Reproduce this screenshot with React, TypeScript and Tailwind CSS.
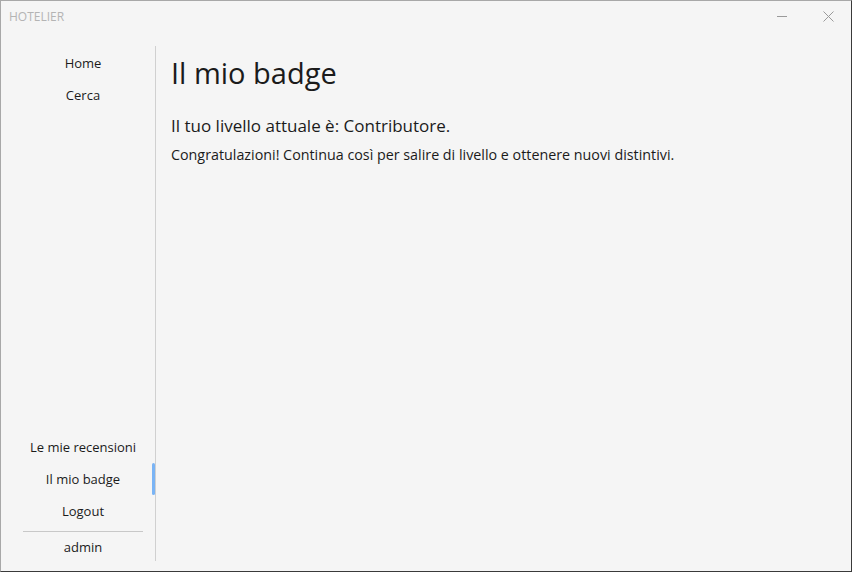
import React from "react";

const font = { fontFamily: '"Segoe UI", "Open Sans", "Noto Sans", sans-serif' };

function NavItem({ label, active }: { label: string; active?: boolean }) {
  return (
    <div className="relative flex h-[32px] items-center justify-center text-[13px] text-[#1b1b1b]">
      <span>{label}</span>
      {active && <div className="absolute right-0 top-[-1px] h-[32px] w-[3px] rounded-sm bg-[#7ab4f5]" />}
    </div>
  );
}

export default function App() {
  return (
    <div
      className="flex h-[572px] w-[852px] flex-col border border-t-[#a8a8a8] border-l-[#a8a8a8] border-r-[#3a3a3a] border-b-[#3a3a3a] bg-[#f5f5f5]"
      style={font}
    >
      <div className="flex h-[31px] items-center justify-between">
        <span className="pl-[8px] text-[12px] text-[#b4b4b4]">HOTELIER</span>
        <div className="flex items-center">
          <div className="flex h-[31px] w-[46px] items-center justify-center">
            <div className="h-px w-[10px] bg-[#9a9a9a]" />
          </div>
          <div className="flex h-[31px] w-[46px] items-center justify-center">
            <svg width="11" height="11" viewBox="0 0 11 11">
              <path d="M0.5 0.5 L10.5 10.5 M10.5 0.5 L0.5 10.5" stroke="#9a9a9a" strokeWidth="1" />
            </svg>
          </div>
        </div>
      </div>
      <div className="flex flex-1 pb-[10px] pt-[14px]">
        <div className="flex w-[155px] flex-col border-r border-[#d0d0d0] pl-[10px]">
          <div className="flex flex-col pt-[2px]">
            <NavItem label="Home" />
            <NavItem label="Cerca" />
          </div>
          <div className="flex-1" />
          <div className="flex flex-col pb-[1px]">
            <NavItem label="Le mie recensioni" />
            <NavItem label="Il mio badge" active />
            <NavItem label="Logout" />
            <div className="ml-[12px] mr-[12px] mt-[3px] h-px bg-[#c8c8c8]" />
            <div className="flex h-[28px] items-center justify-center pt-[4px] text-[13px] text-[#1b1b1b]">admin</div>
          </div>
        </div>
        <div className="flex flex-1 flex-col pl-[15px] text-[#1b1b1b]">
          <h1 className="mt-[8px] text-[29px] leading-[38px]">Il mio badge</h1>
          <p className="mt-[22px] text-[17px] leading-[24px]">Il tuo livello attuale è: Contributore.</p>
          <p className="mt-[7px] text-[14.3px] leading-[20px]">
            Congratulazioni! Continua così per salire di livello e ottenere nuovi distintivi.
          </p>
        </div>
      </div>
    </div>
  );
}
